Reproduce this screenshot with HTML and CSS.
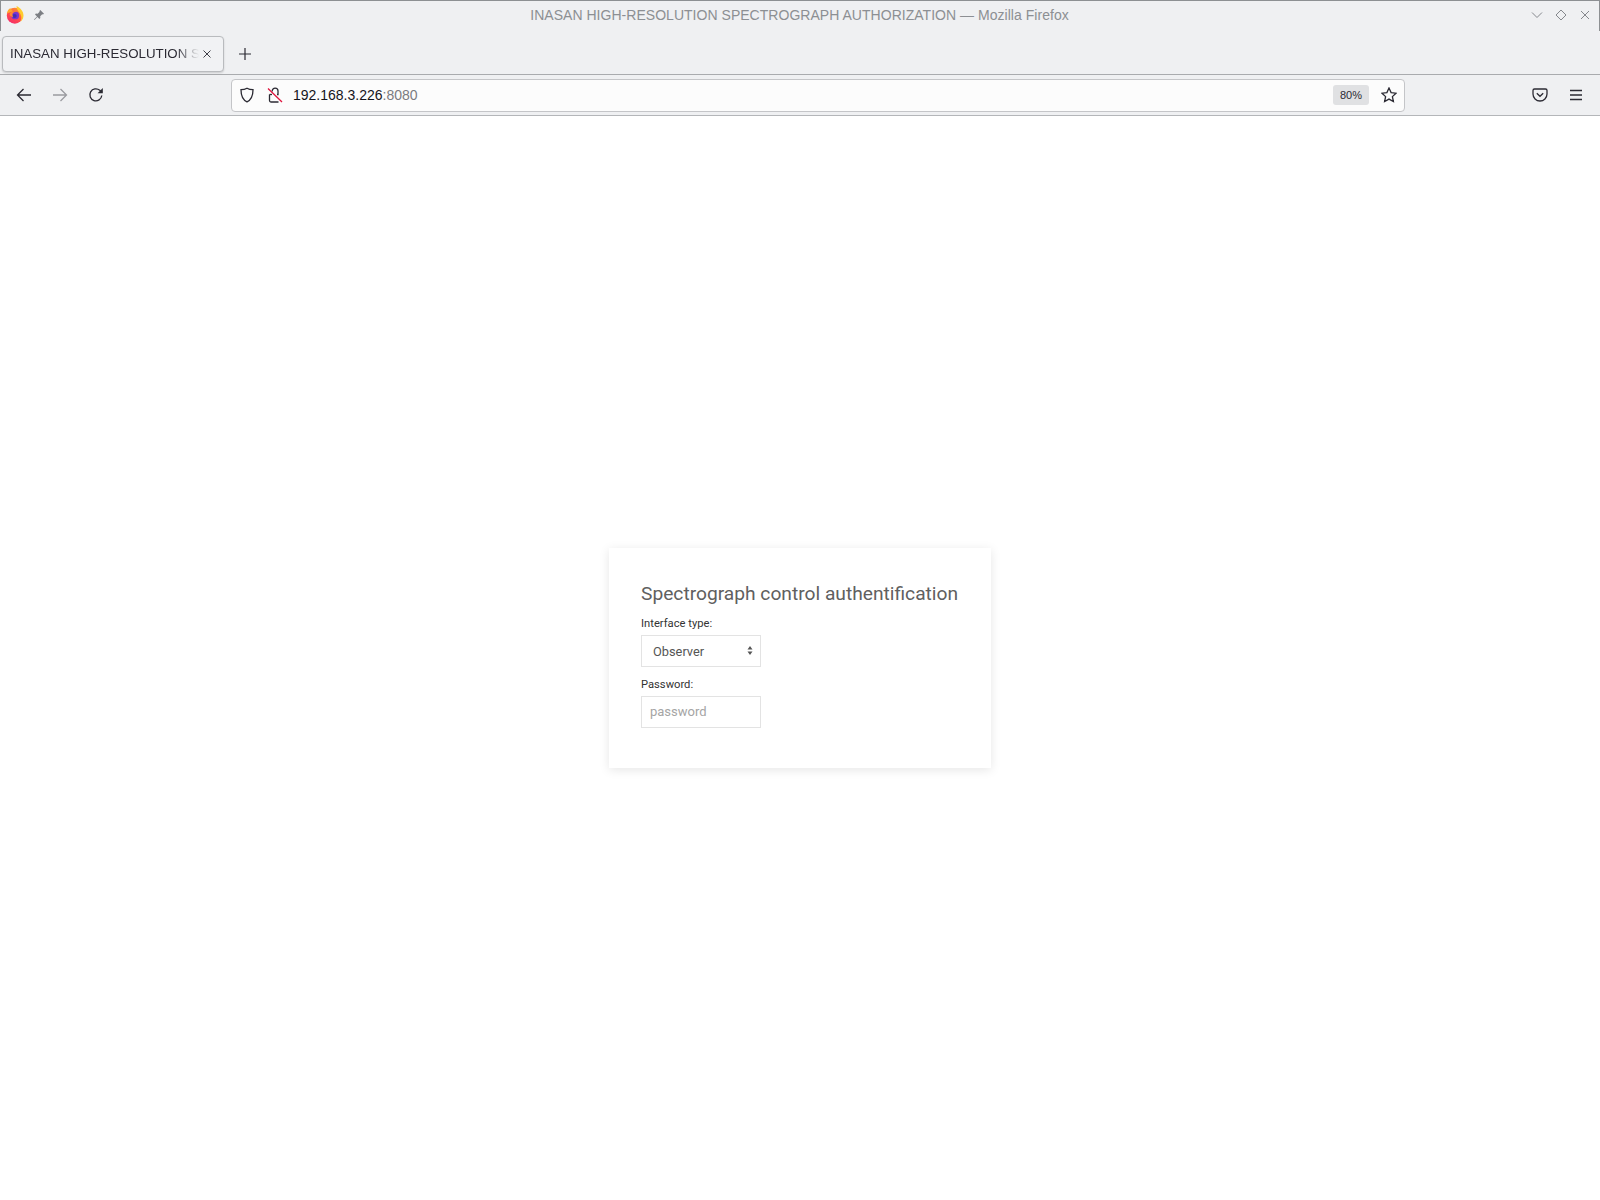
FILE: index.html
```html
<!DOCTYPE html>
<html lang="en">
<head>
    <meta charset="UTF-8">
    <title>INASAN HIGH-RESOLUTION SPECTROGRAPH AUTHORIZATION</title>
    <link rel="stylesheet" href="styles.css">
</head>
<body>

    <div class="titlebar">
        <div class="title-left">
            <svg class="fx-logo" width="18" height="18" viewBox="0 0 18 18">
                <defs>
                    <linearGradient id="fx-body" x1="0.8" y1="0" x2="0.2" y2="1">
                        <stop offset="0" stop-color="#ff9a2c"/>
                        <stop offset="0.55" stop-color="#ff4f4a"/>
                        <stop offset="1" stop-color="#f5286e"/>
                    </linearGradient>
                </defs>
                <circle cx="8.800" cy="9.700" r="8" fill="url(#fx-body)"/>
                <path d="M10.500 0c4 2 7 5.500 7 9.500 0 2.500-1.200 4.800-3 6.200 1.500-3.200 1-6.700-1-9C12 5 10.500 3 10.500 0z" fill="#ffcb2e"/>
                <path d="M.9 7.500C1.300 5 2.500 3 4.300 2.300L7 5.200z" fill="#ffa62c"/>
                <circle cx="9.200" cy="9.400" r="3.900" fill="#7a35cf"/>
                <circle cx="8.600" cy="10" r="2.100" fill="#4230b5"/>
                <path d="M3.600 8.500C4 5.500 9 4 12.200 6.400 10 5.800 7.800 6 6.800 7.200c-.6 1-.5 2.600.4 3.800-1.800-.2-3.200-1-3.600-2.500z" fill="#ff8a30"/>
            </svg>
            <svg class="pin" width="12" height="12" viewBox="0 0 12 12">
                <path d="M7.300 1l3.700 3.700-1 .8-.8-.2-2 2 .1 1.700-.9.900-2-2L1.500 11 1 10.500l3-3-2-2 .9-.9 1.700.1 2-2-.2-.8z" fill="#7c7f84"/>
            </svg>
        </div>
        <div class="window-title">INASAN HIGH-RESOLUTION SPECTROGRAPH AUTHORIZATION — Mozilla Firefox</div>
        <div class="window-buttons">
            <svg width="12" height="12" viewBox="0 0 12 12"><path d="M1 3.500l5 5 5-5" class="win-icon"/></svg>
            <svg width="12" height="12" viewBox="0 0 12 12"><path d="M6 1l5 5-5 5-5-5z" class="win-icon"/></svg>
            <svg width="12" height="12" viewBox="0 0 12 12"><path d="M2 2l8 8M10 2l-8 8" class="win-icon"/></svg>
        </div>
    </div>

    <div class="tabbar">
        <div class="tab">
            <span class="tab-title">INASAN HIGH-RESOLUTION SPECTROGRAPH</span>
            <svg width="10" height="10" viewBox="0 0 10 10"><path d="M1.500 1.500l7 7M8.500 1.500l-7 7" class="tab-close"/></svg>
        </div>
        <svg class="new-tab" width="12" height="12" viewBox="0 0 12 12"><path d="M6 0v12M0 6h12" class="tab-icon"/></svg>
    </div>

    <div class="navbar">
        <div class="nav-buttons">
            <svg width="16" height="16" viewBox="0 0 16 16"><path d="M15 8H1.500M7.500 2l-6 6 6 6" class="nav-icon"/></svg>
            <svg width="16" height="16" viewBox="0 0 16 16"><path d="M1 8h13.500M8.500 2l6 6-6 6" class="nav-icon disabled"/></svg>
            <svg width="16" height="16" viewBox="0 0 16 16">
                <path d="M13.800 8.500A6 6 0 1 1 11.800 3.300L14 5.200" class="nav-icon"/>
                <path d="M14.800 1v5.200H9.600z" fill="#2b2a33"/>
            </svg>
        </div>
        <div class="urlbar">
            <svg width="16" height="16" viewBox="0 0 16 16"><path d="M8 1.200c2 1.200 4 1.500 6 1.500 0 5.800-1.500 10-6 12.100C3.500 12.700 2 8.500 2 2.700c2 0 4-.3 6-1.500z" class="nav-icon"/></svg>
            <svg class="lock" width="16" height="16" viewBox="0 0 16 16">
                <path d="M5.200 4.500V4a2.900 2.900 0 0 1 5.800 0v3.500h-1M2.500 7.500v6a1.500 1.500 0 0 0 1.500 1.500h7.500" class="nav-icon"/>
                <path d="M2.500 7.500h2.500" class="nav-icon"/>
                <path d="M1 1.500l14 13.500" stroke="#e0153e" stroke-width="1.300" fill="none"/>
            </svg>
            <span class="url">192.168.3.226<span class="port">:8080</span></span>
            <span class="zoom-badge">80%</span>
            <svg class="star" width="16" height="16" viewBox="0 0 16 16"><path d="M8 1l2.100 4.600 4.900.6-3.600 3.400 1 4.900L8 12.100l-4.400 2.400 1-4.900L1 6.200l4.900-.6z" class="nav-icon"/></svg>
        </div>
        <div class="nav-right">
            <svg width="16" height="16" viewBox="0 0 16 16">
                <path d="M2.500 2h11A1.500 1.500 0 0 1 15 3.500V7a7 7 0 0 1-14 0V3.500A1.500 1.500 0 0 1 2.500 2z" class="nav-icon"/>
                <path d="M4.800 6.200L8 9.300l3.200-3.100" class="nav-icon"/>
            </svg>
            <svg width="14" height="12" viewBox="0 0 14 12"><path d="M1 1.500h12M1 6h12M1 10.500h12" class="nav-icon"/></svg>
        </div>
    </div>

    <div class="page">
        <form class="login-card">
            <h2>Spectrograph control authentification</h2>
            <label for="interface-type">Interface type:</label>
            <div class="select-wrap">
                <select id="interface-type">
                    <option>Observer</option>
                    <option>Engineer</option>
                </select>
                <svg width="6" height="9" viewBox="0 0 6 9"><path d="M3 0l2.500 3.500h-5zM3 9L.5 5.500h5z" fill="#555"/></svg>
            </div>
            <label for="password">Password:</label>
            <input type="password" id="password" placeholder="password">
        </form>
    </div>

</body>
</html>
```

FILE: styles.css
```css
* {
    box-sizing: border-box;
}
html, body {
    height: 100%;
}
body {
    margin: 0;
    display: flex;
    flex-direction: column;
    height: 1200px;
    overflow: hidden;
    font-family: "Inter", "Liberation Sans", sans-serif;
    background-color: white;
}
svg {
    display: block;
    flex: none;
}
.win-icon {
    fill: none;
    stroke: #85888d;
    stroke-width: 1;
}
.tab-icon {
    fill: none;
    stroke: #2b2a33;
    stroke-width: 1.200;
}
.tab-close {
    fill: none;
    stroke: #3f3f47;
    stroke-width: 1;
}
.nav-icon {
    fill: none;
    stroke: #2b2a33;
    stroke-width: 1.300;
}
.nav-icon.disabled {
    stroke: #9a9ba0;
}

.titlebar {
    height: 31px;
    flex: none;
    display: flex;
    align-items: center;
    justify-content: space-between;
    background-color: #eff0f2;
    border-top: 1px solid #8d9093;
    border-left: 1px solid #8d9093;
    border-right: 1px solid #8d9093;
    padding: 0 8px 2px 5px;
}
.title-left {
    display: flex;
    align-items: center;
    gap: 9px;
    width: 202px;
}
.window-title {
    font-family: "Liberation Sans", sans-serif;
    font-size: 14px;
    letter-spacing: 0.03px;
    color: #8c8f93;
    white-space: nowrap;
}
.window-buttons {
    display: flex;
    justify-content: flex-end;
    gap: 12px;
    width: 200px;
}

.tabbar {
    height: 44px;
    flex: none;
    display: flex;
    align-items: center;
    gap: 15px;
    background-color: #eff0f2;
    border-bottom: 1px solid #a9abae;
    padding: 2px 0 0 2px;
}
.tab {
    width: 222px;
    height: 36px;
    display: flex;
    align-items: center;
    padding: 0 11px 0 7px;
    gap: 3px;
    background-color: #f1f2f4;
    border: 1px solid #b9bbbe;
    border-radius: 4px;
    box-shadow: 0 1px 2px rgba(0, 0, 0, 0.15);
}
.tab-title {
    flex: 1;
    overflow: hidden;
    white-space: nowrap;
    font-family: "Liberation Sans", sans-serif;
    font-size: 13.300px;
    color: #2b2a33;
    -webkit-mask-image: linear-gradient(to right, black 88%, transparent);
}

.navbar {
    height: 41px;
    flex: none;
    display: flex;
    align-items: center;
    background-color: #eff0f2;
    border-bottom: 1px solid #b4b6b9;
    padding-left: 16px;
}
.nav-buttons {
    display: flex;
    gap: 20px;
    width: 215px;
}
.urlbar {
    width: 1174px;
    height: 33px;
    display: flex;
    align-items: center;
    padding: 0 7px;
    background-color: #fcfcfc;
    border: 1px solid #c4c5c8;
    border-radius: 4px;
}
.lock {
    margin-left: 12px;
}
.url {
    flex: 1;
    margin-left: 10px;
    font-family: "Liberation Sans", sans-serif;
    font-size: 14px;
    color: #15141a;
}
.port {
    color: #7b7b80;
}
.zoom-badge {
    width: 36px;
    height: 20px;
    margin-right: -1px;
    line-height: 20px;
    text-align: center;
    font-family: "Liberation Sans", sans-serif;
    font-size: 11px;
    color: #2b2a33;
    background-color: #e0e1e3;
    border-radius: 3px;
}
.star {
    margin-left: 13px;
}
.nav-right {
    flex: 1;
    display: flex;
    align-items: center;
    justify-content: flex-end;
    gap: 21px;
    padding-right: 17px;
}

.page {
    flex: 1;
    display: flex;
    align-items: center;
    justify-content: center;
    background-color: white;
}
.login-card {
    width: 382px;
    height: 220px;
    padding: 32px 32px;
    background-color: white;
    box-shadow: 0 2px 10px rgba(0, 0, 0, 0.1);
    font-family: Roboto, sans-serif;
}
.login-card h2 {
    margin: 0 0 9px;
    font-size: 19.200px;
    font-weight: 400;
    line-height: 28px;
    color: #606060;
    white-space: nowrap;
}
.login-card label {
    display: block;
    font-size: 11.200px;
    line-height: 14px;
    color: #333;
    margin-bottom: 4px;
}
.select-wrap {
    position: relative;
    width: 120px;
    height: 32px;
    margin-bottom: 11px;
}
.select-wrap svg {
    position: absolute;
    right: 8px;
    top: 11px;
    pointer-events: none;
}
select, input {
    display: block;
    width: 120px;
    height: 32px;
    border: 1px solid #e3e3e3;
    border-radius: 0;
    background-color: white;
    font-family: Roboto, sans-serif;
    color: #555;
    outline: none;
}
select {
    appearance: none;
    padding: 0 11px;
    font-size: 12.800px;
}
input {
    padding: 0 8px 2px;
    font-size: 13px;
}
input::placeholder {
    color: #a5a5a5;
    opacity: 1;
}
```
